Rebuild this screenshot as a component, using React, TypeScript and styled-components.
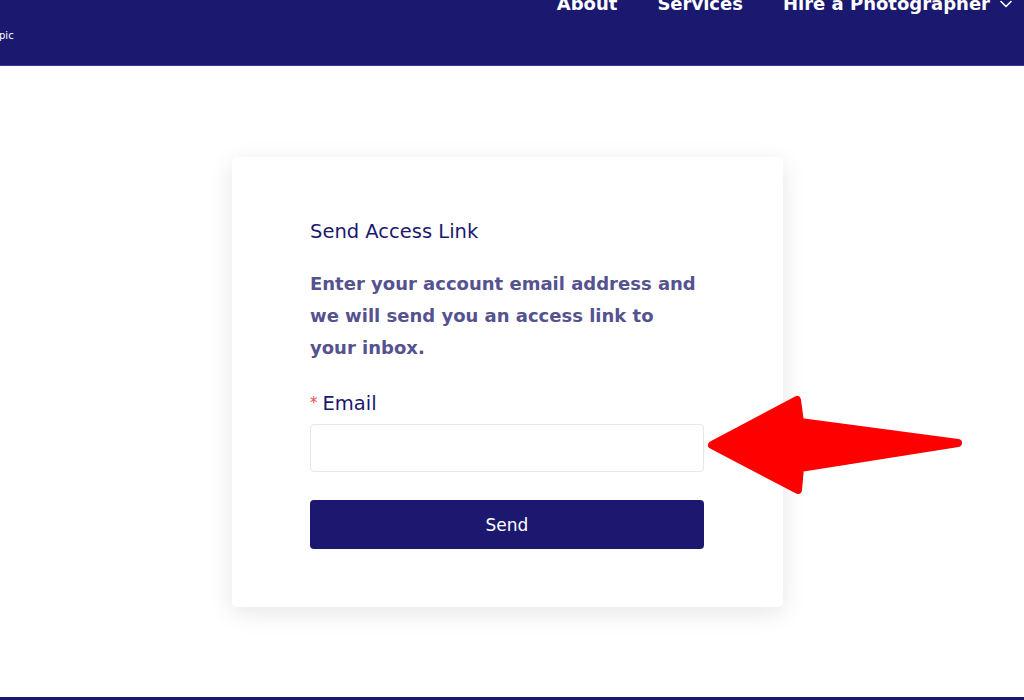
import styled, { createGlobalStyle } from "styled-components";

const GlobalStyle = createGlobalStyle`
  html, body {
    margin: 0;
    padding: 0;
    background: #ffffff;
    font-family: "DejaVu Sans", "Noto Sans", sans-serif;
  }
`;

const Page = styled.div`
  position: relative;
  width: 1024px;
  height: 700px;
  overflow: hidden;
  background: #ffffff;
  display: flex;
  flex-direction: column;
`;

const Header = styled.header`
  height: 66px;
  background: #1b1870;
  border-bottom: 1px solid #3a3790;
  display: flex;
  justify-content: space-between;
  align-items: flex-start;
  box-sizing: border-box;
`;

const Logo = styled.div`
  margin-top: 30px;
  margin-left: -1px;
  font-size: 10px;
  color: #ffffff;
`;

const Nav = styled.nav`
  display: flex;
  align-items: center;
  gap: 40px;
  margin-top: -7px;
  margin-right: 12px;
`;

const NavLink = styled.a`
  color: #ffffff;
  font-size: 18px;
  font-weight: 700;
  text-decoration: none;
  display: flex;
  align-items: center;
  gap: 10px;
`;

const Main = styled.main`
  flex: 1;
  display: flex;
  justify-content: center;
  padding-top: 91px;
`;

const Card = styled.section`
  width: 551px;
  height: 450px;
  box-sizing: border-box;
  background: #ffffff;
  border-radius: 5px;
  box-shadow: 0 6px 24px rgba(0, 0, 0, 0.1);
  padding: 62px 79px 0 78px;
  margin-right: 9px;
`;

const Title = styled.h2`
  margin: 0;
  font-size: 19.5px;
  font-weight: 400;
  color: #1b1870;
  line-height: 25px;
`;

const Lead = styled.p`
  margin: 24px 0 0;
  font-size: 18px;
  font-weight: 700;
  color: #555290;
  line-height: 32px;
  white-space: nowrap;
`;

const Label = styled.label`
  display: block;
  margin-top: 27px;
  font-size: 19.5px;
  color: #1b1870;
  line-height: 24px;
`;

const Required = styled.span`
  color: #f5484b;
  font-size: 15px;
  margin-right: 5px;
  vertical-align: 2px;
`;

const Input = styled.input`
  display: block;
  box-sizing: border-box;
  width: 100%;
  height: 48px;
  margin-top: 8px;
  border: 1px solid #e6e6ee;
  border-radius: 4px;
  background: #ffffff;
  outline: none;
`;

const Button = styled.button`
  display: block;
  width: 100%;
  height: 49px;
  margin-top: 28px;
  border: none;
  border-radius: 4px;
  background: #1c1870;
  color: #ffffff;
  font-family: inherit;
  font-size: 17px;
  cursor: pointer;
`;

const Footer = styled.footer`
  height: 3px;
  background: #1b1870;
`;

const Arrow = styled.svg`
  position: absolute;
  left: 700px;
  top: 390px;
`;

const Chevron = () => (
  <svg width="12" height="8" viewBox="0 0 12 8" fill="none">
    <path d="M1 1.5l5 5 5-5" stroke="#ffffff" strokeWidth="1.6" strokeLinecap="round" strokeLinejoin="round" />
  </svg>
);

export default function App() {
  return (
    <Page>
      <GlobalStyle />
      <Header>
        <Logo>pic</Logo>
        <Nav>
          <NavLink>About</NavLink>
          <NavLink>Services</NavLink>
          <NavLink>
            Hire a Photographer <Chevron />
          </NavLink>
        </Nav>
      </Header>
      <Main>
        <Card>
          <Title>Send Access Link</Title>
          <Lead>
            Enter your account email address and
            <br />
            we will send you an access link to
            <br />
            your inbox.
          </Lead>
          <Label htmlFor="email">
            <Required>*</Required>Email
          </Label>
          <Input id="email" type="email" />
          <Button>Send</Button>
        </Card>
      </Main>
      <Footer />
      <Arrow width="270" height="110" viewBox="0 0 270 110">
        <polygon
          points="12,55 97,10 100,32 258,53 100,78 98,100"
          fill="#ff0000"
          stroke="#ff0000"
          strokeWidth="8"
          strokeLinejoin="round"
        />
      </Arrow>
    </Page>
  );
}
